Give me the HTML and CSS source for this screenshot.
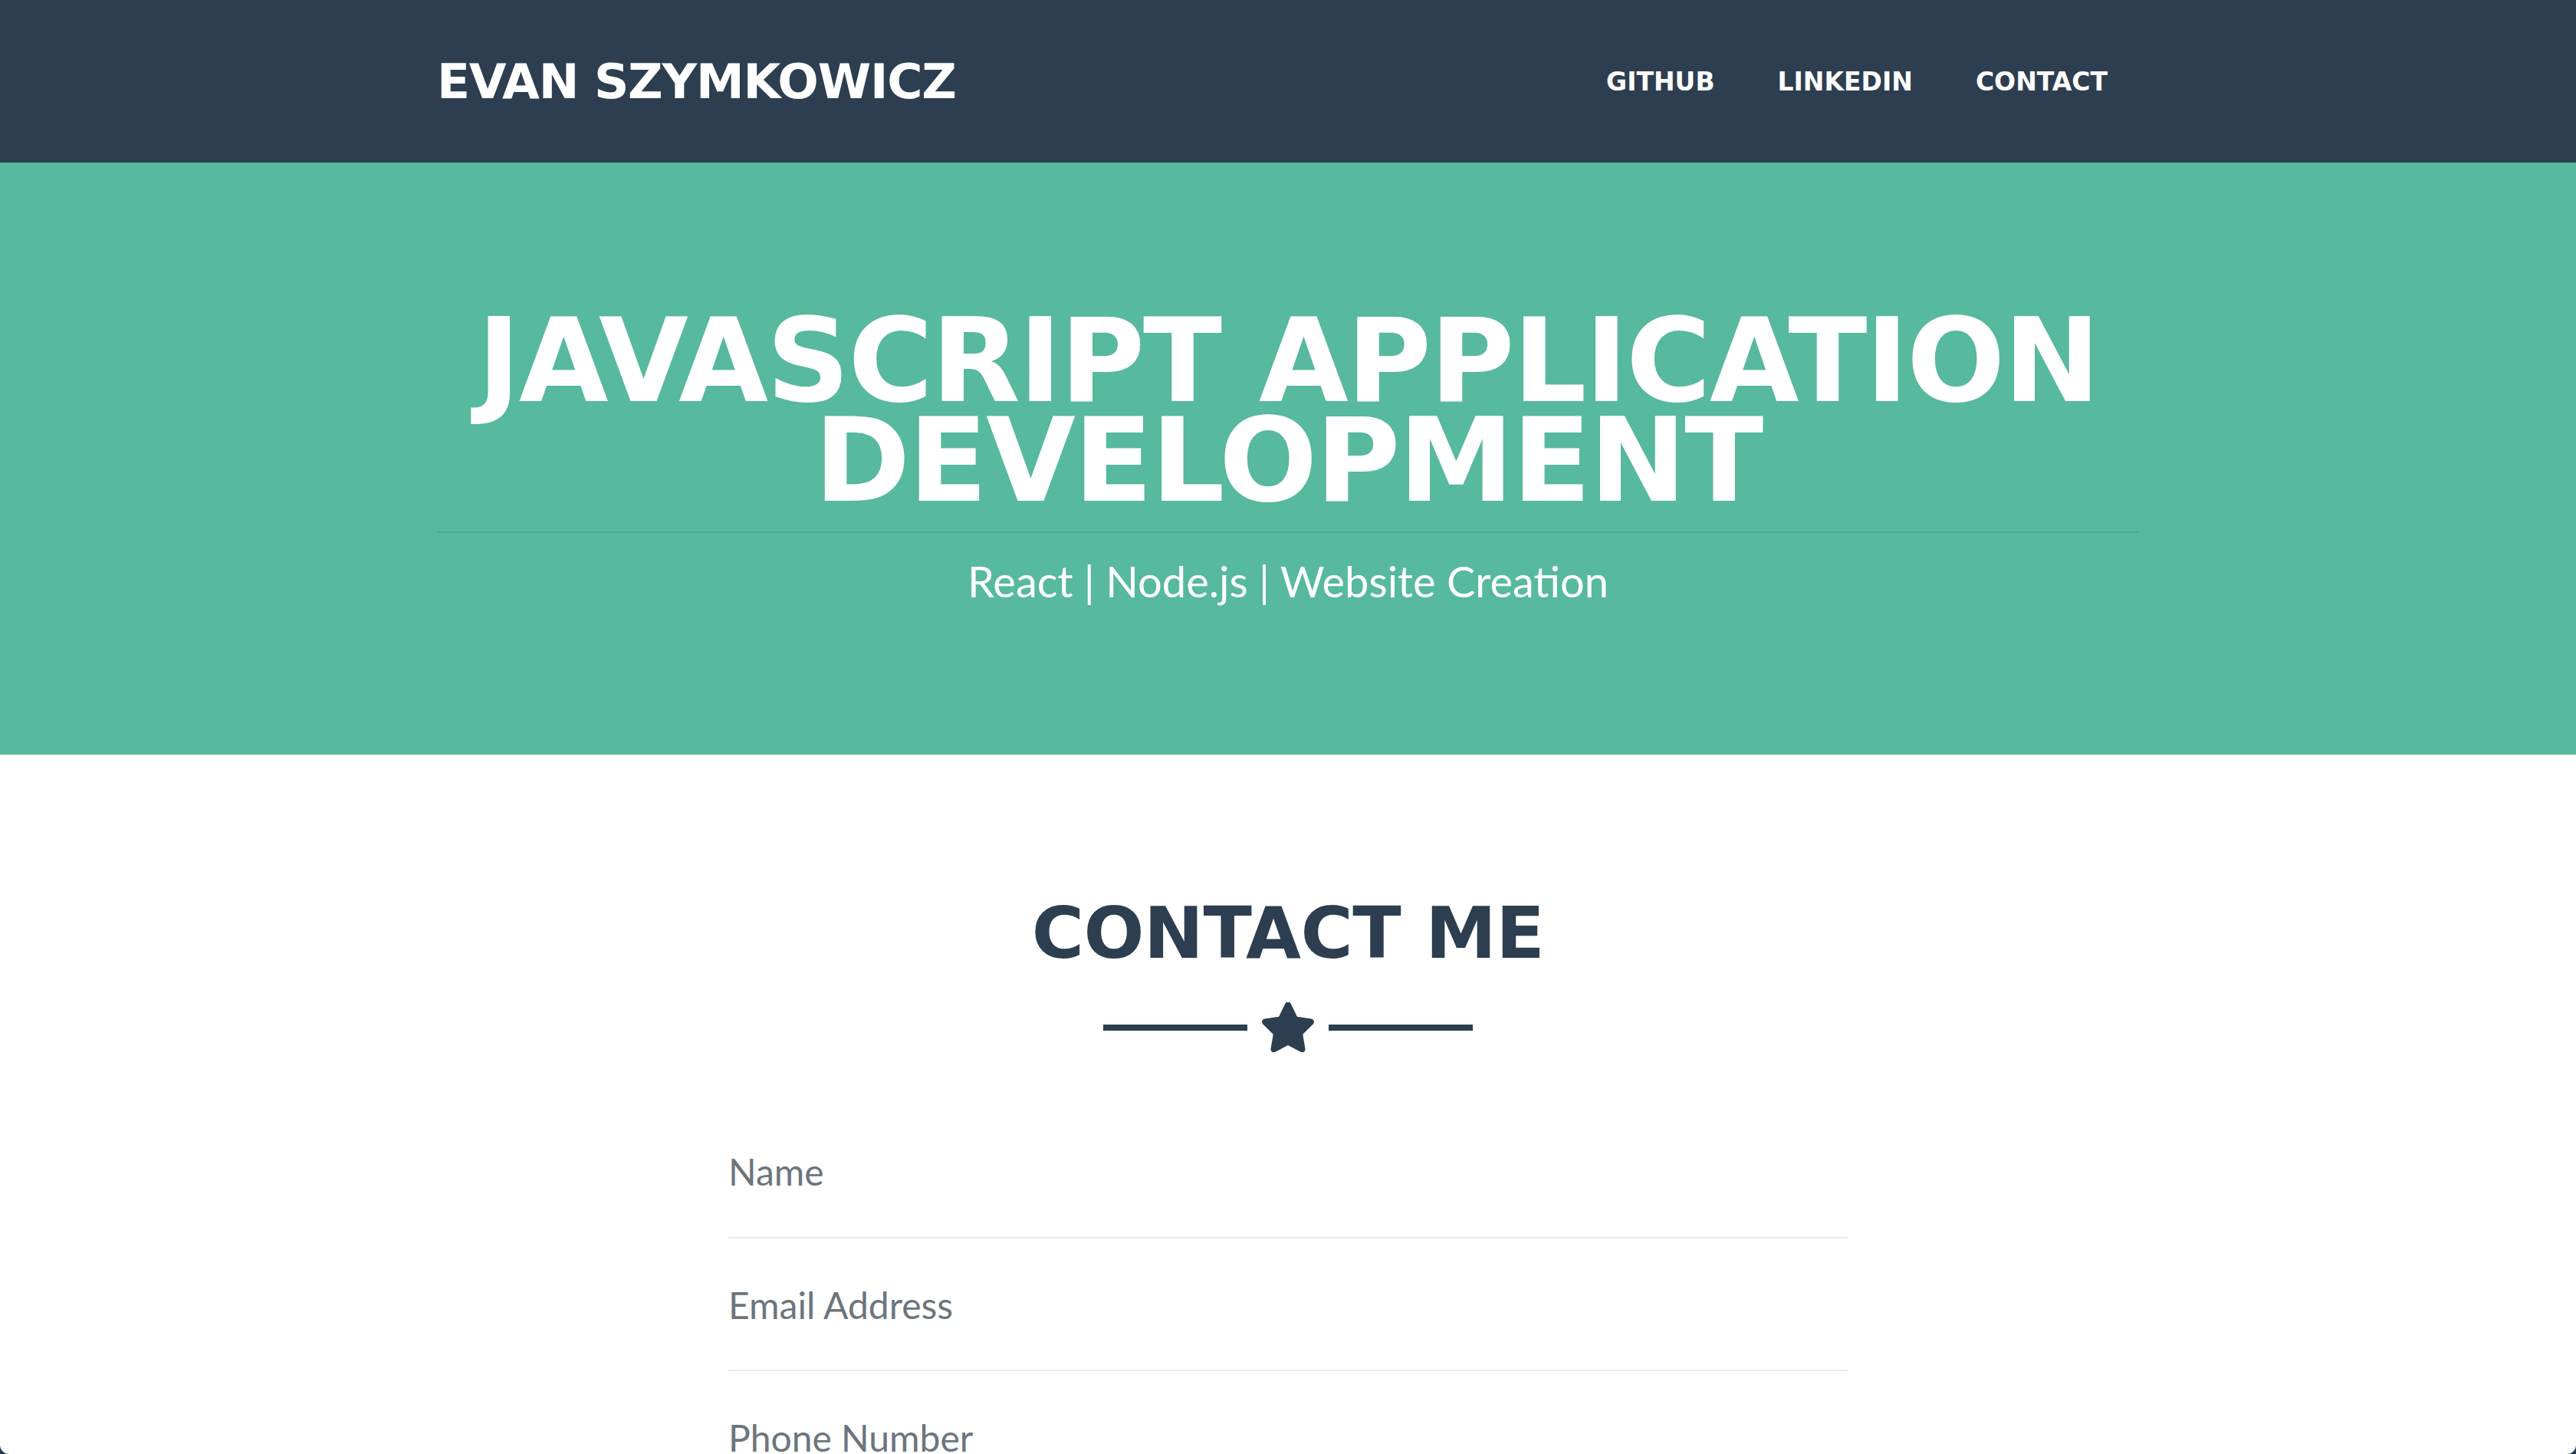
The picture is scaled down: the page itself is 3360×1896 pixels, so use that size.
FILE: index.html
```html
<!DOCTYPE html>
<html lang="en">
<head>
<meta charset="utf-8">
<title>Evan Szymkowicz</title>
<link rel="stylesheet" href="styles.css">
</head>
<body>
<div class="page">
  <nav class="navbar">
    <div class="container nav-inner">
      <a class="brand" href="#">EVAN SZYMKOWICZ</a>
      <ul class="nav-links">
        <li><a href="#">GITHUB</a></li>
        <li><a href="#">LINKEDIN</a></li>
        <li><a href="#">CONTACT</a></li>
      </ul>
    </div>
  </nav>

  <header class="hero">
    <div class="container hero-inner">
      <h1 class="hero-title"><span class="hero-line">JAVASCRIPT APPLICATION</span><span class="hero-line">DEVELOPMENT</span></h1>
      <hr class="hero-rule">
      <p class="hero-skills">React | Node.js | Website Creation</p>
    </div>
  </header>

  <section class="contact">
    <h2 class="section-title">CONTACT ME</h2>
    <div class="divider">
      <span class="divider-line"></span>
      <svg class="divider-star" viewBox="20 4 536 506" preserveAspectRatio="none" aria-hidden="true">
        <path d="M259.3 17.8L194 150.2 47.9 171.5c-26.2 3.8-36.7 36.1-17.7 54.6l105.7 103-25 145.5c-4.5 26.3 23.2 46 46.4 33.7L288 439.6l130.7 68.7c23.2 12.2 50.9-7.4 46.4-33.7l-25-145.5 105.7-103c19-18.5 8.5-50.8-17.7-54.6L382 150.2 316.7 17.8c-11.7-23.6-45.6-23.9-57.4 0z"/>
      </svg>
      <span class="divider-line"></span>
    </div>
    <form class="contact-form">
      <div class="field"><span class="field-text">Name</span></div>
      <div class="field"><span class="field-text">Email Address</span></div>
      <div class="field"><span class="field-text">Phone Number</span></div>
    </form>
  </section>
</div>
</body>
</html>
```

FILE: styles.css
```css
html {
  background: #2b3a55;
}
body {
  margin: 0;
  font-family: "Lato", "Liberation Sans", sans-serif;
}
.page {
  height: 100vh;
  overflow: hidden;
  background: #ffffff;
  border-radius: 0 0 12px 12px;
}
.container {
  width: 2220px;
  margin: 0 auto;
}

/* Navbar */
.navbar {
  background: #2d3e50;
  height: 212px;
  display: flex;
  align-items: center;
}
.nav-inner {
  display: flex;
  align-items: center;
  justify-content: space-between;
}
.brand {
  font-family: "DejaVu Sans", sans-serif;
  font-weight: 700;
  font-size: 63px;
  line-height: 1;
  letter-spacing: -1.2px;
  color: #ffffff;
  text-decoration: none;
}
.nav-links {
  list-style: none;
  margin: 0;
  padding: 0;
  display: flex;
}
.nav-links a {
  display: block;
  padding: 0 41px;
  font-family: "DejaVu Sans", sans-serif;
  font-weight: 700;
  font-size: 33px;
  line-height: 1;
  color: #ffffff;
  text-decoration: none;
}

/* Hero */
.hero {
  background: #57b99d;
  padding: 194px 0 193px;
  color: #ffffff;
}
.hero-inner {
  text-align: center;
}
.hero-title {
  margin: 0;
  font-family: "DejaVu Sans", sans-serif;
  font-weight: 700;
  font-size: 151px;
  line-height: 130px;
  letter-spacing: -2.3px;
}
.hero-line {
  display: block;
  height: 130px;
}
.hero-rule {
  margin: 27px 0 0;
  border: 0;
  border-top: 2px solid #4ea88e;
  height: 0;
}
.hero-skills {
  margin: 29px 0 0;
  font-family: "Lato", sans-serif;
  font-weight: 400;
  font-size: 56px;
  line-height: 1.2;
}

/* Contact */
.contact {
  padding-top: 187px;
}
.section-title {
  margin: 0;
  text-align: center;
  font-family: "DejaVu Sans", sans-serif;
  font-weight: 700;
  font-size: 93px;
  line-height: 1;
  letter-spacing: -0.5px;
  color: #2d3e50;
}
.divider {
  margin-top: 43px;
  display: flex;
  align-items: center;
  justify-content: center;
  gap: 19px;
}
.divider-line {
  width: 188px;
  height: 8px;
  background: #2d3e50;
}
.divider-star {
  width: 68px;
  height: 65px;
  fill: #2d3e50;
}
.contact-form {
  width: 1460px;
  margin: 69px auto 0;
}
.field {
  padding: 58px 0 56px;
  border-bottom: 2px solid #e9ecef;
}
.field-text {
  display: block;
  font-family: "Lato", sans-serif;
  font-size: 48px;
  line-height: 1.2;
  color: #6c757d;
}
```
